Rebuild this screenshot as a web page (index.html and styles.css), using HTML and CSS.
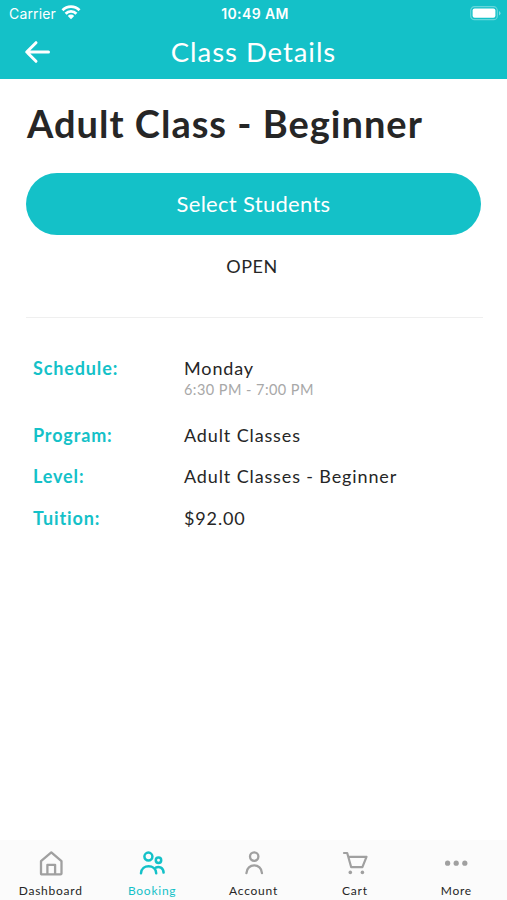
FILE: index.html
```html
<!DOCTYPE html>
<html lang="en">
<head>
    <meta charset="UTF-8">
    <meta name="viewport" content="width=device-width, initial-scale=1.0">
    <title>Class Details</title>
    <link rel="stylesheet" href="styles.css">
</head>
<body>
    <header class="header">
        <div class="status-bar">
            <div class="carrier">
                <span>Carrier</span>
                <svg class="wifi" width="20" height="16" viewBox="0 0 20 16" fill="none" stroke="#fff" stroke-width="2.8">
                    <path d="M1.5 6.2a12 12 0 0 1 17 0"/>
                    <path d="M4.6 9.7a7.6 7.6 0 0 1 10.8 0"/>
                    <path d="M10 15.2l-3.2-3.3a4.5 4.5 0 0 1 6.4 0z" fill="#fff" stroke="none"/>
                </svg>
            </div>
            <span class="time">10:49 AM</span>
            <div class="battery">
                <svg width="31" height="15" viewBox="0 0 31 15">
                    <rect x="0.7" y="0.7" width="26.6" height="13" rx="3.8" fill="none" stroke="#fff" stroke-opacity="0.35" stroke-width="1.2"/>
                    <rect x="2.6" y="2.6" width="22.8" height="9.2" rx="2" fill="#fff"/>
                    <path d="M29 5v4.6q1.5-.8 1.5-2.3T29 5z" fill="#fff" fill-opacity="0.45"/>
                </svg>
            </div>
        </div>
        <div class="nav-bar">
            <a class="back" href="#" aria-label="Back">
                <svg width="28" height="24" viewBox="0 0 28 24" fill="none" stroke="#fff" stroke-width="3" stroke-linecap="round" stroke-linejoin="round">
                    <path d="M25.5 12H4M13 2.7L3.7 12l9.3 9.3"/>
                </svg>
            </a>
            <h1 class="nav-title">Class Details</h1>
        </div>
    </header>

    <main class="content">
        <h2 class="class-name">Adult Class - Beginner</h2>
        <button class="button">Select Students</button>
        <p class="availability">OPEN</p>
        <dl class="details">
            <dt>Schedule:</dt>
            <dd class="schedule">
                <span class="day">Monday</span>
                <span class="hours">6:30 PM - 7:00 PM</span>
            </dd>
            <dt>Program:</dt>
            <dd class="program">Adult Classes</dd>
            <dt>Level:</dt>
            <dd class="level">Adult Classes - Beginner</dd>
            <dt>Tuition:</dt>
            <dd class="tuition">$92.00</dd>
        </dl>
    </main>

    <nav class="tab-bar">
        <a class="tab" href="#">
            <svg width="26" height="28" viewBox="0 0 26 28" fill="none" stroke="#a0a0a0" stroke-width="2.3" stroke-linejoin="round">
                <path d="M3 12.2L13.3 3.4l10.2 8.8v12.2q0 1-1 1H4q-1 0-1-1z"/>
                <path d="M9.4 25v-9.2h7.7V25"/>
            </svg>
            <span>Dashboard</span>
        </a>
        <a class="tab active" href="#">
            <svg width="26" height="28" viewBox="0 0 26 28" fill="none" stroke="#14c1c8" stroke-width="2.5" stroke-linecap="round">
                <circle cx="9.4" cy="7.6" r="4"/>
                <circle cx="19.5" cy="11.2" r="2.7"/>
                <path d="M2 24.2c.5-9.4 14.7-9.4 15.2 0"/>
                <path d="M16.8 18.6c3.4-1.8 7.6.3 7.8 5"/>
            </svg>
            <span>Booking</span>
        </a>
        <a class="tab" href="#">
            <svg width="26" height="28" viewBox="0 0 26 28" fill="none" stroke="#a0a0a0" stroke-width="2.3" stroke-linecap="round">
                <circle cx="13.2" cy="7.6" r="4.2"/>
                <path d="M5.4 24.2c.3-10.4 15.3-10.4 15.6 0"/>
            </svg>
            <span>Account</span>
        </a>
        <a class="tab" href="#">
            <svg width="26" height="28" viewBox="0 0 26 28" fill="none" stroke="#a0a0a0" stroke-width="2.2" stroke-linecap="round" stroke-linejoin="round">
                <path d="M2 4h3.2l4 14.2h11.2L24.5 7.8H6.4"/>
                <circle cx="8.3" cy="23.4" r="1.8" fill="#a0a0a0" stroke="none"/>
                <circle cx="20.4" cy="23.4" r="1.8" fill="#a0a0a0" stroke="none"/>
            </svg>
            <span>Cart</span>
        </a>
        <a class="tab" href="#">
            <svg width="26" height="28" viewBox="0 0 26 28" fill="#a0a0a0">
                <circle cx="4.6" cy="14.2" r="2.6"/>
                <circle cx="13.2" cy="14.2" r="2.6"/>
                <circle cx="21.8" cy="14.2" r="2.6"/>
            </svg>
            <span>More</span>
        </a>
    </nav>
</body>
</html>
```
FILE: styles.css
```css
* {
    box-sizing: border-box;
}
body {
    font-family: Lato, sans-serif;
    margin: 0;
    display: flex;
    flex-direction: column;
    height: 100vh;
    color: #262626;
    background-color: #fff;
}
a {
    color: inherit;
    text-decoration: none;
}
.header {
    height: 79px;
    color: #fff;
    background-color: #14c1c8;
}
.status-bar {
    display: grid;
    grid-template-columns: 1fr auto 1fr;
    align-items: center;
    height: 27px;
    padding: 0 6px 0 9px;
    font-family: Inter, sans-serif;
    font-size: 14px;
}
.carrier {
    display: flex;
    align-items: center;
    gap: 5px;
    letter-spacing: 0.15px;
}
.wifi {
    margin-top: -3px;
}
.time {
    font-size: 14px;
    font-weight: 600;
    letter-spacing: 0.4px;
}
.battery {
    display: flex;
    justify-content: flex-end;
}
.nav-bar {
    display: grid;
    grid-template-columns: 60px 1fr 60px;
    align-items: center;
    height: 49px;
}
.back {
    display: flex;
    padding-left: 23px;
}
.nav-title {
    margin: 0;
    font-size: 27.5px;
    font-weight: 400;
    letter-spacing: 0.95px;
    text-align: center;
}
.content {
    flex: 1;
    padding: 20px 26px 0;
}
.class-name {
    margin: 0 0 0 1px;
    font-size: 38px;
    font-weight: 700;
    line-height: 48px;
    letter-spacing: 1px;
    white-space: nowrap;
}
.button {
    display: block;
    width: 455px;
    height: 62px;
    margin-top: 26px;
    padding: 0 0 2px;
    border: none;
    border-radius: 31px;
    color: #fff;
    background-color: #14c1c8;
    font-family: inherit;
    font-size: 22px;
    letter-spacing: 0.3px;
    cursor: pointer;
}
.availability {
    margin: 19px 3px 0 0;
    font-size: 18px;
    line-height: 24px;
    letter-spacing: 0.5px;
    text-align: center;
}
.details {
    display: grid;
    grid-template-columns: 151px 1fr;
    row-gap: 17.5px;
    width: 457px;
    margin: 39px 0 0;
    padding: 38px 0 0 7px;
    border-top: 1px solid #efefef;
    font-size: 18px;
    line-height: 24px;
    letter-spacing: 0.87px;
}
.details dt {
    color: #14c1c8;
    font-weight: 700;
}
.details dd {
    margin: 0;
}
.schedule {
    display: flex;
    flex-direction: column;
    padding-bottom: 6px;
}
.hours {
    margin-top: 1px;
    color: #a8a8a8;
    font-size: 14.5px;
    line-height: 18px;
    letter-spacing: 0.45px;
}
.tab-bar {
    display: flex;
    height: 60px;
    background-color: #fbfbfb;
}
.tab {
    flex: 1;
    display: flex;
    flex-direction: column;
    align-items: center;
    padding-top: 9px;
    font-size: 12px;
    line-height: 16px;
    letter-spacing: 0.75px;
}
.tab span {
    margin-top: 6px;
}
.active {
    color: #14c1c8;
}
```
